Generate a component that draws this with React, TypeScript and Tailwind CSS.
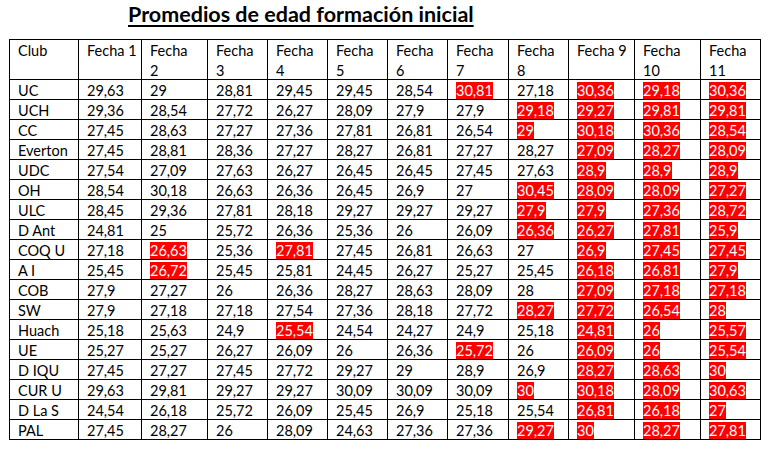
import React from "react";

// column widths measured from the sheet (px, each includes its right border)
const COLS = "grid-cols-[69px_63px_66px_60px_60px_60px_60px_61px_60px_66px_66px_60px]";

const HEADERS = ["1", "2", "3", "4", "5", "6", "7", "8", "9", "10", "11"];
// single-line headers in the original
const ONE_LINE = new Set(["1", "9"]);

// a trailing * marks a cell highlighted in red
const ROWS: string[][] = [
  ["UC", "29,63", "29", "28,81", "29,45", "29,45", "28,54", "30,81*", "27,18", "30,36*", "29,18*", "30,36*"],
  ["UCH", "29,36", "28,54", "27,72", "26,27", "28,09", "27,9", "27,9", "29,18*", "29,27*", "29,81*", "29,81*"],
  ["CC", "27,45", "28,63", "27,27", "27,36", "27,81", "26,81", "26,54", "29*", "30,18*", "30,36*", "28,54*"],
  ["Everton", "27,45", "28,81", "28,36", "27,27", "28,27", "26,81", "27,27", "28,27", "27,09*", "28,27*", "28,09*"],
  ["UDC", "27,54", "27,09", "27,63", "26,27", "26,45", "26,45", "27,45", "27,63", "28,9*", "28,9*", "28,9*"],
  ["OH", "28,54", "30,18", "26,63", "26,36", "26,45", "26,9", "27", "30,45*", "28,09*", "28,09*", "27,27*"],
  ["ULC", "28,45", "29,36", "27,81", "28,18", "29,27", "29,27", "29,27", "27,9*", "27,9*", "27,36*", "28,72*"],
  ["D Ant", "24,81", "25", "25,72", "26,36", "25,36", "26", "26,09", "26,36*", "26,27*", "27,81*", "25,9*"],
  ["COQ U", "27,18", "26,63*", "25,36", "27,81*", "27,45", "26,81", "26,63", "27", "26,9*", "27,45*", "27,45*"],
  ["A I", "25,45", "26,72*", "25,45", "25,81", "24,45", "26,27", "25,27", "25,45", "26,18*", "26,81*", "27,9*"],
  ["COB", "27,9", "27,27", "26", "26,36", "28,27", "28,63", "28,09", "28", "27,09*", "27,18*", "27,18*"],
  ["SW", "27,9", "27,18", "27,18", "27,54", "27,36", "28,18", "27,72", "28,27*", "27,72*", "26,54*", "28*"],
  ["Huach", "25,18", "25,63", "24,9", "25,54*", "24,54", "24,27", "24,9", "25,18", "24,81*", "26*", "25,57*"],
  ["UE", "25,27", "25,27", "26,27", "26,09", "26", "26,36", "25,72*", "26", "26,09*", "26*", "25,54*"],
  ["D IQU", "27,45", "27,27", "27,45", "27,72", "29,27", "29", "28,9", "26,9", "28,27*", "28,63*", "30*"],
  ["CUR U", "29,63", "29,81", "29,27", "29,27", "30,09", "30,09", "30,09", "30*", "30,18*", "28,09*", "30,63*"],
  ["D La S", "24,54", "26,18", "25,72", "26,09", "25,45", "26,9", "25,18", "25,54", "26,81*", "26,18*", "27*"],
  ["PAL", "27,45", "28,27", "26", "28,09", "24,63", "27,36", "27,36", "29,27*", "30*", "28,27*", "27,81*"],
];

function Cell({ value }: { value: string }) {
  const red = value.endsWith("*");
  const text = red ? value.slice(0, -1) : value;
  return (
    <div className="h-[20px] border-r border-b border-black pl-2 pt-[2px] leading-[17px] whitespace-nowrap">
      {red ? <span className="bg-[#ff0000] text-white">{text}</span> : text}
    </div>
  );
}

export default function App() {
  return (
    <div className="min-h-screen bg-white text-black font-['Lato',sans-serif] text-[14.5px]">
      <h1 className="pl-[128px] text-[21.5px] font-bold leading-[28px] underline decoration-2 underline-offset-[3px]">
        Promedios de edad formación inicial
      </h1>

      <div className={`mt-[11px] ml-[9px] grid w-fit ${COLS} border-l border-t border-black`}>
        <div className="h-[40px] border-r border-b border-black pl-2 pt-[1px] leading-[20px]">Club</div>
        {HEADERS.map((n) => (
          <div key={n} className="h-[40px] border-r border-b border-black pl-2 pt-[1px] leading-[20px]">
            {ONE_LINE.has(n) ? (
              <span className="whitespace-nowrap">Fecha {n}</span>
            ) : (
              <>
                Fecha
                <br />
                {n}
              </>
            )}
          </div>
        ))}

        {ROWS.map((row) => row.map((v, i) => <Cell key={row[0] + i} value={v} />))}
      </div>
    </div>
  );
}
